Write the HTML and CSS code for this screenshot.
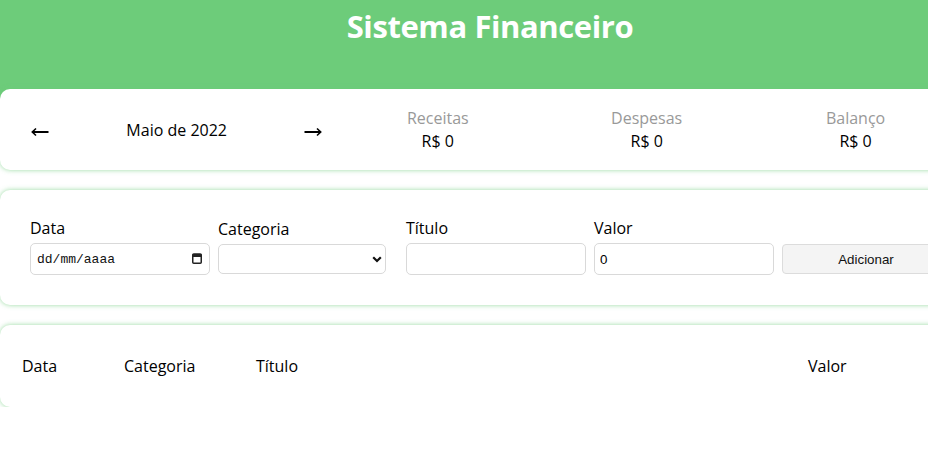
FILE: index.html
```html
<!DOCTYPE html>
<html lang="pt-BR">
<head>
<meta charset="utf-8">
<title>Sistema Financeiro</title>
<link rel="stylesheet" href="styles.css">
</head>
<body>
<div class="page">
  <header class="header">
    <h1 class="header-title">Sistema Financeiro</h1>
  </header>
  <main class="container">
    <section class="card info-area">
      <div class="month-area">
        <div class="month-arrow">
          <svg width="18" height="10" viewBox="0 0 18 10"><path d="M1.5 5H17.5" stroke="#000" stroke-width="2"/><path d="M5 1.5L1.3 5L5 8.5" fill="none" stroke="#000" stroke-width="1.6"/></svg>
        </div>
        <div class="month-title">Maio de 2022</div>
        <div class="month-arrow">
          <svg width="18" height="10" viewBox="0 0 18 10"><path d="M0.5 5H16.5" stroke="#000" stroke-width="2"/><path d="M13 1.5L16.7 5L13 8.5" fill="none" stroke="#000" stroke-width="1.6"/></svg>
        </div>
      </div>
      <div class="resume-area">
        <div class="resume-item">
          <div class="resume-title">Receitas</div>
          <div class="resume-info">R$ 0</div>
        </div>
        <div class="resume-item">
          <div class="resume-title">Despesas</div>
          <div class="resume-info">R$ 0</div>
        </div>
        <div class="resume-item">
          <div class="resume-title">Balanço</div>
          <div class="resume-info">R$ 0</div>
        </div>
      </div>
    </section>

    <section class="card input-area">
      <label class="input-label">
        <div class="input-title">Data</div>
        <div class="field date-field">
          <span class="date-text">dd/mm/aaaa</span>
          <svg class="cal-icon" width="10" height="11" viewBox="0 0 10 11"><rect x="0.75" y="1" width="8.5" height="9.25" rx="1" fill="none" stroke="#222" stroke-width="1.5"/><rect x="0.5" y="1" width="9" height="3" fill="#222"/></svg>
        </div>
      </label>
      <label class="input-label">
        <div class="input-title">Categoria</div>
        <div class="select-wrap">
          <select class="select"><option></option></select>
          <svg class="chevron" width="10" height="7" viewBox="0 0 10 7"><path d="M1.2 1.2L5 5L8.8 1.2" fill="none" stroke="#111" stroke-width="2.2"/></svg>
        </div>
      </label>
      <label class="input-label">
        <div class="input-title">Título</div>
        <input class="field text-field" type="text">
      </label>
      <label class="input-label">
        <div class="input-title">Valor</div>
        <input class="field text-field" type="text" value="0">
      </label>
      <div class="input-label">
        <div class="input-title">&nbsp;</div>
        <button class="add-button" type="button">Adicionar</button>
      </div>
    </section>

    <table class="card table">
      <thead>
        <tr>
          <th class="th th-data">Data</th>
          <th class="th th-cat">Categoria</th>
          <th class="th">Título</th>
          <th class="th th-valor">Valor</th>
        </tr>
      </thead>
      <tbody></tbody>
    </table>
  </main>
</div>
</body>
</html>
```
FILE: styles.css
```css
html, body {
  margin: 0;
  padding: 0;
  overflow: hidden;
  background: #fff;
}
body {
  font-family: "Open Sans", "Noto Sans", sans-serif;
  font-size: 16px;
  color: #000;
}
.page {
  width: 980px;
}
.header {
  background: #6dcc7a;
  height: 129px;
  text-align: center;
}
.header-title {
  margin: 0;
  padding-top: 6px;
  color: #fff;
  font-size: 31px;
  letter-spacing: -0.4px;
  line-height: 40px;
  font-weight: 700;
}
.container {
  width: 980px;
}
.card {
  background: #fff;
  border-radius: 10px;
  box-shadow: 0 0 5px rgba(110, 204, 122, 0.7);
  box-sizing: border-box;
}
.info-area {
  margin-top: -40px;
  padding: 20px;
  display: flex;
  align-items: center;
}
.month-area {
  flex: 1;
  display: flex;
  align-items: center;
}
.month-arrow {
  width: 40px;
  display: flex;
  justify-content: center;
  align-items: center;
  height: 20px;
  margin-top: 4px;
}
.month-title {
  flex: 1;
  text-align: center;
  line-height: 20px;
}
.resume-area {
  flex: 2;
  display: flex;
}
.resume-item {
  flex: 1;
  text-align: center;
}
.resume-title {
  color: #999;
  line-height: 18px;
  margin-bottom: 5px;
}
.resume-info {
  line-height: 18px;
}
.input-area {
  margin-top: 20px;
  padding: 20px;
  display: flex;
  align-items: center;
}
.input-label {
  flex: 1;
  min-width: 0;
  margin: 10px;
  display: block;
}
.input-title {
  line-height: 17px;
  padding-bottom: 6px;
}
.field {
  width: 100%;
  height: 30px;
  padding: 0 5px;
  border: 1px solid #d9d9d9;
  border-radius: 5px;
  box-sizing: content-box;
  background: #fff;
  margin: 0;
}
.date-field {
  display: flex;
  align-items: center;
  justify-content: space-between;
}
.date-text {
  font-family: "Liberation Mono", "DejaVu Sans Mono", monospace;
  font-size: 13px;
  color: #111;
  padding-left: 1px;
}
.cal-icon {
  margin-right: 2px;
  margin-top: -1px;
}
.text-field {
  font-family: "Liberation Sans", Arial, sans-serif;
  font-size: 13.33px;
  color: #000;
  outline: none;
}
.select-wrap {
  position: relative;
}
.select {
  display: block;
  width: 100%;
  height: 30px;
  border: 1px solid #d9d9d9;
  border-radius: 5px;
  background: #fff;
  appearance: none;
  -webkit-appearance: none;
  box-sizing: border-box;
  margin: 0;
}
.chevron {
  position: absolute;
  right: 4px;
  top: 12px;
}
.add-button {
  display: block;
  width: 100%;
  height: 30px;
  border: 1px solid #dcdcdc;
  border-radius: 4px;
  background: #f4f4f4;
  font-family: "Liberation Sans", Arial, sans-serif;
  font-size: 13.33px;
  color: #111;
  box-sizing: border-box;
  margin: 0;
}
.table {
  width: 100%;
  margin-top: 20px;
  padding: 20px;
  border-spacing: 2px;
}
.th {
  padding: 10px 0;
  text-align: left;
  font-weight: 400;
  line-height: 18px;
}
.th-data { width: 100px; }
.th-cat { width: 130px; }
.th-valor { width: 150px; }
```
